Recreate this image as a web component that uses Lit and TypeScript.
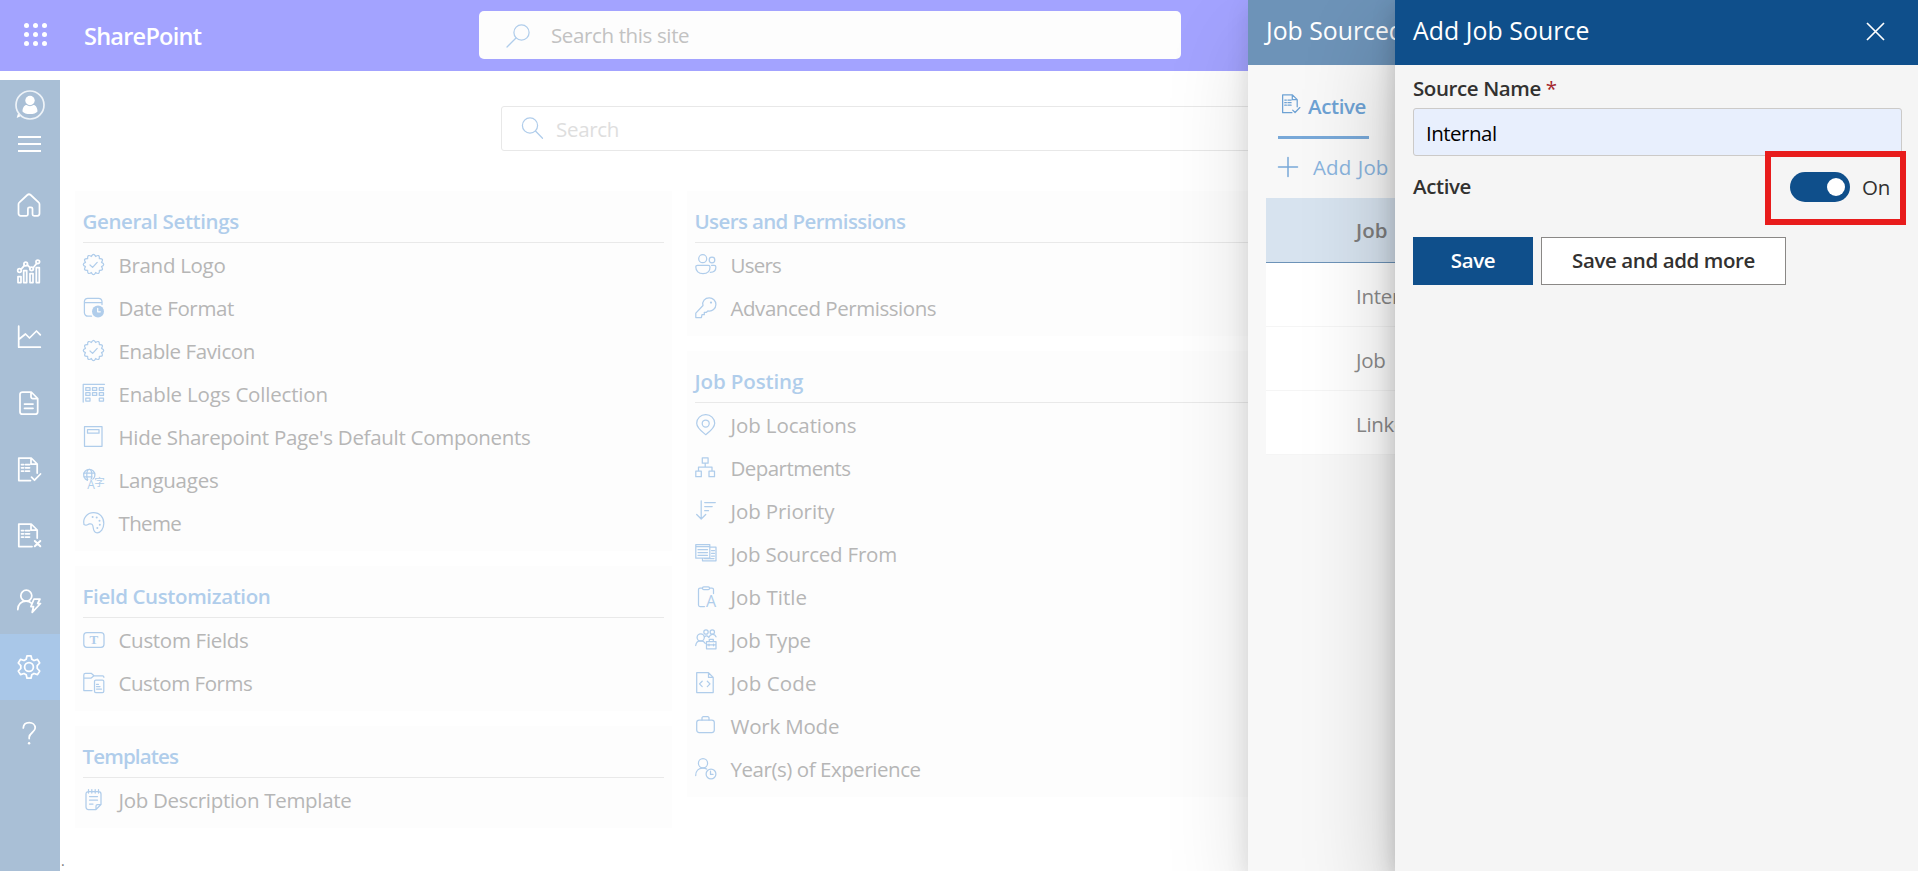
import { LitElement, html, css, svg } from "lit";
import type { SVGTemplateResult } from "lit";
import { customElement, property } from "lit/decorators.js";

/** Outline of a round badge with `n` soft lobes, centred in a 22px box. */
function scallop(n: number, outer: number, inner: number): string {
  const at = (i: number, r: number) => {
    const a = (i * Math.PI) / n - Math.PI / 2;
    return `${(10.5 + r * Math.cos(a)).toFixed(2)} ${(10.5 + r * Math.sin(a)).toFixed(2)}`;
  };
  let d = `M${at(-1, inner)}`;
  for (let i = 0; i < n; i++) d += `Q${at(i * 2, outer)} ${at(i * 2 + 1, inner)}`;
  return d + "Z";
}

const badge = svg`<path d=${scallop(12, 12.4, 8.3)} /><path d="M7 11l2.6 2.4 4.6-5" />`;

const icons: Record<string, SVGTemplateResult> = {
  badge,
  date: svg`<path d="M8.5 19.2H5a3.5 3.5 0 0 1-3.6-3.5V4.6A3.4 3.4 0 0 1 4.8 1.4h10.8A3.4 3.4 0 0 1 19 4.6V7.5M1.4 5.6H19" /><circle class="solid" cx="15" cy="14.5" r="6" /><path class="knock" d="M14.7 11.3v3.5h2.6" />`,
  logs: svg`<path d="M.2 19V1.3H21.5" /><path d="M2.800 4.600h4.200v2.800H2.800zM9.500 4.600h4.200v2.800H9.500zM16.300 4.600h4.200v2.800h-4.200zM2.800 9.600h4.200v2.800H2.800zM9.500 9.600h4.200v2.800H9.500zM16.300 9.600h4.200v2.800h-4.200zM2.800 15.200h4.200V18H2.800zM16.300 15.200h4.200V18h-4.200z" />`,
  page: svg`<path d="M1.500.7h17.500v19.600H1.500zM4.500 3.600h11.500v3.600H4.500z" />`,
  lang: svg`<circle cx="6.300" cy="6" r="5.600" /><ellipse cx="6.300" cy="6" rx="2.500" ry="5.600" /><path d="M1 4.200h10.500M1 7.800h8" /><rect class="plate" x="5" y="10.500" width="6.500" height="10" /><text x="4.200" y="19.800" font-size="12">A</text><text x="11.300" y="17.300" font-size="10.500">字</text>`,
  palette: svg`<path d="M1 12.500C-.5 6.500 4 .7 10.500.7c6.500 0 10.500 5 10.300 10.800-.2 5.500-3 9.300-6.600 9.300-3.500 0-3.700-2.800-4-5.300-.3-2.800-1.400-4.200-3.800-3.600-1.800.5-2.700 2.400-5.400.6Z" /><g class="dots"><circle cx="9.600" cy="5" r="1" /><circle cx="13.700" cy="5.500" r="1" /><circle cx="16.500" cy="8.700" r="1" /><circle cx="16.800" cy="12.700" r="1" /><circle cx="14.300" cy="16" r="1" /></g>`,
  field: svg`<rect x=".8" y="3.500" width="20.200" height="14.800" rx="3" /><text class="serif" x="6.600" y="15.200" font-size="13">T</text>`,
  forms: svg`<path d="M9 18.500H.8V3A1.700 1.700 0 0 1 2.500 1.300h5.700l2.800 2.500H19.500a1.500 1.500 0 0 1 1.400 1.500M.8 6h7.400l2.800-2.200" /><rect x="11.500" y="8" width="9.300" height="12.500" rx="1.300" /><path d="M13.500 12.300h2M13.500 14.600h3.500M13.500 17h5" />`,
  notepad: svg`<path d="M13 20.500H5.500A2.500 2.500 0 0 1 3 18V5a2.500 2.500 0 0 1 2.500-2.500h10A2.500 2.500 0 0 1 18 5v10.500zM13 20.500V17a1.500 1.500 0 0 1 1.500-1.500H18M5.500.5v3.500M8.800.5v3.500M12.200.5v3.500M15.500.5v3.500M6.500 7.500h8M6.500 11.200h8M6.500 15h3.500" />`,
  users: svg`<circle cx="7.700" cy="4.700" r="4" /><circle cx="17" cy="6" r="2.800" /><path d="M2.500 11.300h10.800a1.700 1.700 0 0 1 1.700 1.700c0 4-2.600 6.700-7 6.700s-7.200-2.700-7.200-6.700a1.700 1.700 0 0 1 1.700-1.700ZM16.500 11.300h2.700a1.700 1.700 0 0 1 1.700 1.700c0 3.300-2 5.300-5.600 5.300" />`,
  key: svg`<path d="M8 8.500C6.800 4.200 10 .8 14.200.8a6.600 6.600 0 0 1 6.700 6.600c0 4-3.600 7.500-8 6.500l-1.400 1.400H9.300v2.400H7l-.6 2.800H.8v-4.400z" /><circle class="solid" cx="16" cy="5.600" r="1.100" />`,
  pin: svg`<path d="M10.800 20.700C7 17.600 1.700 14 1.700 9.200A8.800 8.500 0 0 1 10.700.7a8.800 8.500 0 0 1 9 8.500c0 4.800-5.100 8.400-8.900 11.500Z" /><circle cx="10.700" cy="9.500" r="3.500" />`,
  org: svg`<path d="M7.300.8h5.800v5.400H7.300zM.8 14.200h5.500v5.500H.8zM14 14.200h5.500v5.500H14zM3.500 14.200V10H17v4.200M10.200 6.200V10" />`,
  sort: svg`<path d="M6.200.8v18M1.700 14.500l4.500 4.500 4.500-4.500M9.700 2.500h10.600M9.700 6.500h7.500M9.700 10.700h3.800" />`,
  sourced: svg`<path d="M.8 1.500h14v13.700H.8zM.8 3.500h14M14.800 4.200H21v13.600H7.500v-2.600M3 6.700h9.500M3 9.500h9.500M3 12.300h9.500M16.500 7.500h3M16.500 10.300h3M16.500 13.100h3M9.500 15.500H19" />`,
  title: svg`<path d="M9.500 20.500H5A1.500 1.500 0 0 1 3.500 19V3.500A1.500 1.500 0 0 1 5 2h2.500M14.500 2H17a1.500 1.500 0 0 1 1.500 1.500V7.500" /><rect x="7.500" y=".8" width="7" height="2.800" rx="1.200" /><text x="10.900" y="20.900" font-size="16">A</text>`,
  type: svg`<circle cx="5.700" cy="8.400" r="3.600" /><path d="M.7 16.500c.4-3.200 2.400-4.600 5-4.600s3.700 1 4.600 2.600" /><circle cx="11" cy="3" r="2.200" /><circle cx="17.300" cy="3" r="2.200" /><path d="M9.500 7.800c1.500-1.600 3.200-1 4.300.7 1.400-3.600 5.700-4.500 7.200-.7M11.500 12.600h9.500v7.200h-9.500zM11.500 15.800h9.500M14.300 12.500v-2.200h4v2.200M14 15v1.800M18.500 15v1.800" />`,
  code: svg`<path d="M1.700.7h11.800l4.700 4.700v15.100H1.700zM13.500.7v4.700h4.700M7.200 9.200l-2.700 2.700 2.700 2.700M12.300 9.200l2.700 2.700-2.700 2.700" />`,
  work: svg`<rect x="1.700" y="5" width="17.600" height="12.500" rx="2.500" /><path d="M7 5V3a1.300 1.300 0 0 1 1.300-1.300h4.400A1.300 1.300 0 0 1 14 3v2" />`,
  years: svg`<circle cx="8" cy="5.300" r="4.600" /><path d="M.7 17.500c0-5 3.300-7.500 7-7.500 1.800 0 3 .4 4 1.100" /><circle cx="16" cy="16" r="4.900" /><path d="M15.500 13.200v3.200h2.500" />`,

  home: svg`<path d="M9.200 22.800H3.700A2.200 2.200 0 0 1 1.500 20.600V11.300a2.500 2.500 0 0 1 .9-2L10.300 2a2.500 2.500 0 0 1 3.400 0l7.900 7.300a2.500 2.500 0 0 1 .9 2v9.300a2.200 2.200 0 0 1-2.200 2.200h-3.200a1.600 1.600 0 0 1-1.600-1.600v-5.400a1.500 1.500 0 0 0-1.500-1.500h-1.600a1.500 1.500 0 0 0-1.500 1.500v5.400a1.600 1.600 0 0 1-1.700 1.600Z" />`,
  bars: svg`<path d="M1 17.500h3v6H1zM6.700 11.500h3v12h-3zM13 14.500h3v9h-3zM19.300 8.500h3v15h-3zM4 10.300l3.500-4M10.300 6l3 2.800M16.200 8.700l3.500-4.300" /><circle cx="2.500" cy="11.500" r="1.800" /><circle cx="8.700" cy="5" r="1.800" /><circle cx="14.600" cy="9.800" r="1.800" /><circle cx="20.800" cy="2.800" r="1.800" />`,
  trend: svg`<path d="M1.700 1.200v21h21.600M1.700 14.500l6.800-5.500 4 4L19.500 6l3.800 3.800" />`,
  doc: svg`<path d="M5.500 1h8.700l6.500 6.500v13.200a2.500 2.500 0 0 1-2.500 2.500H5.500A2.500 2.500 0 0 1 3 20.700V3.500A2.500 2.500 0 0 1 5.500 1ZM14 1.200v4.600a1.800 1.800 0 0 0 1.800 1.800h4.700M7.500 13h8.500M7.500 17.300h8.500" />`,
  check: svg`<path d="M13.500 23.500H1.800V1h12.400l6 6v9M14 1v6h6M4.500 7.500h2M8.500 7.500h4M4.500 10.800h2M8.500 10.800h4M4.500 14h2M8.500 14h4M14.500 20.200l3 3 6-6.200" />`,
  cross: svg`<path d="M15 23.500H1.800V1h12.400l6 6v8M14 1v6h6M4.500 7.500h2M8.500 7.500h4M4.500 10.800h2M8.500 10.800h4M4.500 14h2M8.500 14h4" /><path stroke-width="2" d="M17.800 18l5.500 5.200M23.300 18l-5.500 5.200" />`,
  person: svg`<circle cx="9.300" cy="6.700" r="5.500" /><path d="M.8 20.500c0-5.500 3.500-8.300 8.300-8.300 2.300 0 4 .7 5.300 1.900" /><path d="M17 10h6l-2.300 4.500h2.800L15.200 23.300l1.300-5.800h-2.600z" />`,
  gear: svg`<path d="M10 .8h4l.8 3.500 2.200 1.200 3.500-1.100 2.200 3.600-2.500 2.600v2.800l2.500 2.600-2.200 3.600-3.500-1.100-2.200 1.200-.8 3.500h-4l-.8-3.500-2.200-1.200-3.500 1.100-2.200-3.600 2.500-2.600v-2.800L1.300 8l2.200-3.600L7 5.500l2.200-1.200z" /><circle cx="12" cy="12" r="4.400" />`,
  help: svg`<path d="M6.300 7C6.500 3.500 8.800 1.700 12.200 1.700s6 2 6 5.300c0 4-6 5-6 9.200v1.300" /><circle class="solid" cx="12.100" cy="22.300" r="1.200" />`,
  search: svg`<circle cx="9" cy="8.500" r="7.600" /><path d="M14.500 14l7 7.300" />`,
  searchLeft: svg`<circle cx="15.500" cy="8.500" r="7.600" /><path d="M10 14L1 23" />`,
};

const icon = (name: string, size: number, kind: string) =>
  svg`<svg class="icon ${kind}" width=${size} height=${size} viewBox="0 0 ${size} ${size}">${icons[name]}</svg>`;

const iconStyles = css`
  .icon { display: block; flex: none; fill: none; stroke: currentColor; stroke-linejoin: round; stroke-linecap: round; overflow: visible; }
  .thin { stroke-width: 1.25; }
  .bold { stroke-width: 1.75; }
  .icon .solid, .icon .dots { fill: currentColor; stroke: none; }
  .icon .knock { stroke: #fdfdfd; }
  .icon .plate { fill: #fdfdfd; stroke: none; }
  .icon text { fill: currentColor; stroke: none; font-family: "Open Sans", "Noto Sans CJK SC", sans-serif; letter-spacing: 0; }
  .icon .serif { font-family: "Liberation Serif", serif; font-weight: 700; }
`;

/** Icon name, label, and tracking of the label in px. */
type Item = [string, string, number];
interface Group { title: string; tracking: number; items: Item[]; }

const leftGroups: Group[] = [
  {
    title: "General Settings", tracking: -0.4, items: [
      ["badge", "Brand Logo", -0.3],
      ["date", "Date Format", -0.35],
      ["badge", "Enable Favicon", -0.4],
      ["logs", "Enable Logs Collection", -0.19],
      ["page", "Hide Sharepoint Page's Default Components", -0.29],
      ["lang", "Languages", -0.25],
      ["palette", "Theme", -0.65],
    ],
  },
  { title: "Field Customization", tracking: -0.38, items: [["field", "Custom Fields", -0.3], ["forms", "Custom Forms", -0.45]] },
  { title: "Templates", tracking: -0.85, items: [["notepad", "Job Description Template", -0.3]] },
];
const rightGroups: Group[] = [
  { title: "Users and Permissions", tracking: -0.62, items: [["users", "Users", -0.75], ["key", "Advanced Permissions", -0.45]] },
  {
    title: "Job Posting", tracking: -0.12, items: [
      ["pin", "Job Locations", -0.1],
      ["org", "Departments", -0.55],
      ["sort", "Job Priority", -0.1],
      ["sourced", "Job Sourced From", -0.2],
      ["title", "Job Title", 0.05],
      ["type", "Job Type", -0.1],
      ["code", "Job Code", 0.15],
      ["work", "Work Mode", -0.2],
      ["years", "Year(s) of Experience", -0.45],
    ],
  },
];
const navItems = ["home", "bars", "trend", "doc", "check", "cross", "person", "gear", "help"];

@customElement("settings-card")
export class SettingsCard extends LitElement {
  @property({ attribute: false }) group!: Group;
  static styles = [iconStyles, css`
    :host { display: block; background: #fdfdfd; padding: 0 8px 7px 7.5px; box-sizing: border-box; }
    .title { height: 51px; line-height: 61px; border-bottom: 1px solid #e9e9e9; color: #b0cdeb; font-weight: 600; }
    .row { display: flex; align-items: center; height: 43px; color: #b6b6b6; }
    .icon { color: #b0cdeb; margin: 0 14px 0 0; }
    .label { line-height: 43px; padding-top: 1px; white-space: nowrap; }
  `];
  render() {
    const { title, tracking, items } = this.group;
    return html`
      <div class="title" style="letter-spacing:${tracking}px">${title}</div>
      ${items.map(([name, label, spacing]) => html`<div class="row">${icon(name, 22, "thin")}<span class="label" style="letter-spacing:${spacing}px">${label}</span></div>`)}
    `;
  }
}

@customElement("nav-rail")
export class NavRail extends LitElement {
  static styles = [iconStyles, css`
    :host { display: flex; flex-direction: column; width: 60px; flex: none; background: #a9bfd6; color: #fff; }
    .brand { height: 92px; display: flex; flex-direction: column; align-items: center; padding-top: 10px; box-sizing: border-box; }
    .burger { width: 23px; height: 16px; margin-top: 16px; margin-right: 1px; display: flex; flex-direction: column; justify-content: space-between; }
    .burger i { height: 2px; background: #fff; }
    .item { height: 66px; display: flex; align-items: center; justify-content: center; padding: 0 2px 1px 0; box-sizing: border-box; }
    .current { background: #a9c7e8; }
  `];
  render() {
    return html`
      <div class="brand">
        <svg width="30" height="30" viewBox="0 0 30 30" fill="#fff">
          <circle cx="15" cy="15" r="14" fill="none" stroke="#eef3f8" stroke-width="1.7" />
          <circle cx="15" cy="10.5" r="4.7" /><path d="M7.500 21.500c0-4 2-6.500 4-6.500 2 1.500 5 1.500 7 0 2 0 4 2.500 4 6.500-2 3.400-13 3.400-15 0Z" />
          <path d="M3 23.500l2.500 2.700-3.800 1.800z" />
        </svg>
        <div class="burger"><i></i><i></i><i></i></div>
      </div>
      ${navItems.map((n) => html`<div class="item ${n === "gear" ? "current" : ""}">${icon(n, 24, "bold")}</div>`)}
    `;
  }
}

@customElement("source-list-panel")
export class SourceListPanel extends LitElement {
  static styles = [iconStyles, css`
    :host { display: block; overflow: hidden; white-space: nowrap; background: #f8f8f8; }
    .head { height: 65px; line-height: 60px; padding-left: 18px; background: #6d93b8; color: #fff; font-size: 24.8px; letter-spacing: var(--title-spacing); overflow: hidden; }
    .body { padding-left: 18px; }
    .tab { display: flex; align-items: center; width: 91px; height: 74px; margin-left: 12px; padding-bottom: 3px; box-sizing: border-box; border-bottom: 3px solid #78a8d8; color: #6ea2d4; font-weight: 600; letter-spacing: var(--semi-spacing); }
    .tab span { padding-top: 14px; }
    .tab .icon { margin: 10px 7px 0 4px; }
    .add { display: flex; align-items: center; height: 59px; padding: 0 0 0 12px; color: #8ab4de; letter-spacing: 0.1px; }
    .add .icon { color: #78a8d8; margin: -3px 15px 0 0; }
    .add span { word-spacing: 1px; margin-top: -4px; }
    .th { height: 64px; line-height: 64px; padding-left: 90px; background: #d7e3ef; border-bottom: 1px solid #6d93b8; color: #7e7e7e; font-weight: 600; letter-spacing: 0; overflow: hidden; }
    .td { height: 63px; line-height: 66px; padding-left: 90px; background: #fff; border-bottom: 1px solid #f5f5f5; color: #8b8b8b; overflow: hidden; }
  `];
  render() {
    return html`
      <div class="head">Job Sourced</div>
      <div class="body">
        <div class="tab"><svg class="icon thin" width="19" height="22" viewBox="1 0 24 25"><g stroke-width="1.6">${icons.check}</g></svg><span>Active</span></div>
        <div class="add"><svg class="icon" width="20" height="20" stroke-width="1.5"><path d="M10 .5v19M.5 10h19" /></svg><span>Add Job</span></div>
        <div class="th">Job</div>
        ${["Inter", "Job", "Linke"].map((s) => html`<div class="td">${s}</div>`)}
      </div>
    `;
  }
}

@customElement("add-source-panel")
export class AddSourcePanel extends LitElement {
  static styles = css`
    :host { display: block; background: #f5f5f5; color: #323130; }
    .head { display: flex; justify-content: space-between; height: 65px; line-height: 60px; padding: 0 33px 0 18px; background: #0f4f8b; color: #fff; font-size: 24.8px; letter-spacing: 0.08px; }
    .head svg { margin-top: 22px; }
    .body { padding: 0 16px 0 18px; }
    .semi { font-weight: 600; letter-spacing: var(--semi-spacing); }
    .label { height: 43px; line-height: 47px; }
    .label b { color: #a4262c; font-weight: 400; }
    .input { height: 48px; box-sizing: border-box; border: 1px solid #cccac8; border-radius: 3px; background: #e8effd; color: #000; line-height: 49px; padding-left: 12px; letter-spacing: -0.5px; }
    .active { display: flex; justify-content: space-between; height: 81px; }
    .active > span { line-height: 61px; }
    .toggle { display: flex; align-items: center; position: relative; height: 62px; padding-right: 12px; }
    .track { width: 60px; height: 30px; border-radius: 15px; box-sizing: border-box; padding: 6px 5px 6px 37px; background: #0f4f8b; margin-right: 12px; }
    .knob { width: 18px; height: 18px; border-radius: 50%; background: #fff; }
    .mark { position: absolute; left: -25px; top: -5px; width: 141px; height: 74px; box-sizing: border-box; border: 6px solid #e81c1c; }
    .buttons { display: flex; gap: 8px; }
    .btn { height: 48px; line-height: 46px; width: 120px; text-align: center; box-sizing: border-box; background: #0f4f8b; color: #fff; }
    .more { width: 245px; border: 1px solid #8a8886; background: #fff; color: #323130; line-height: 44px; }
  `;
  render() {
    return html`
      <div class="head"><span>Add Job Source</span>
        <svg width="19" height="19" viewBox="0 0 19 19" fill="none" stroke="#fff" stroke-width="1.7"><path d="M1 1l17 17M18 1L1 18" /></svg>
      </div>
      <div class="body">
        <div class="label semi">Source Name <b>*</b></div>
        <div class="input">Internal</div>
        <div class="active"><span class="semi">Active</span>
          <div class="toggle"><div class="track"><div class="knob"></div></div><span>On</span><div class="mark"></div></div>
        </div>
        <div class="buttons"><div class="btn semi">Save</div><div class="btn more semi">Save and add more</div></div>
      </div>
    `;
  }
}

@customElement("app-root")
export class AppRoot extends LitElement {
  static styles = [iconStyles, css`
    :host {
      display: flex; flex-direction: column; position: relative; height: 871px; overflow: hidden; background: #fff;
      font-family: "Open Sans", "Noto Sans", sans-serif; font-size: 20.5px; letter-spacing: -0.3px;
      --semi-spacing: -0.4px; --title-spacing: 0px;
    }
    .top { display: flex; align-items: center; height: 71px; flex: none; padding-bottom: 2px; box-sizing: border-box; background: #a3a3ff; color: #fff; }
    .waffle { width: 23px; height: 23px; margin: 0 37px 0 24px; display: grid; grid-template-columns: repeat(3, 5px); grid-auto-rows: 5px; gap: 4px; }
    .waffle i { border-radius: 50%; background: #fff; }
    .name { width: 395px; font-size: 23.5px; font-weight: 600; letter-spacing: -0.75px; padding-top: 2px; }
    .site-search { display: flex; align-items: center; width: 702px; height: 48px; box-sizing: border-box; padding: 1px 0 0 27px; border-radius: 5px; background: #fdfdfd; color: #c2c2c2; letter-spacing: -0.37px; }
    .site-search .icon { color: #b0cdeb; margin: 2px 21px 0 0; }
    .main { display: flex; flex: 1; margin-top: 9px; }
    .dot { align-self: flex-end; width: 15px; height: 22px; line-height: 24px; color: #777; font-size: 14px; text-indent: 1px; }
    .content { flex: 1; }
    .filter { display: flex; align-items: center; width: 900px; height: 45px; box-sizing: border-box; margin: 26px 0 40px 426px; padding-left: 19px; border: 1px solid #e8e8e8; border-radius: 3px; color: #dedede; }
    .filter .icon { color: #b0cdeb; margin: -2px 13px 0 0; }
    .columns { display: grid; grid-template-columns: 597px 1fr; column-gap: 15px; align-items: start; }
    .column { display: flex; flex-direction: column; gap: 15px; }
    .list-panel { position: absolute; left: 1248px; top: 0; width: 147px; height: 871px; box-shadow: rgba(0, 0, 0, 0.13) 0 38px 86px, rgba(0, 0, 0, 0.1) 0 7px 22px; }
    .add-panel { position: absolute; left: 1395px; top: 0; width: 523px; height: 871px; box-shadow: rgba(0, 0, 0, 0.22) 0 38px 86px, rgba(0, 0, 0, 0.18) 0 7px 22px; }
  `];
  render() {
    const column = (groups: Group[]) => html`<div class="column">${groups.map((g) => html`<settings-card .group=${g}></settings-card>`)}</div>`;
    return html`
      <header class="top">
        <div class="waffle">${Array.from({ length: 9 }, () => html`<i></i>`)}</div>
        <div class="name">SharePoint</div>
        <div class="site-search">${icon("searchLeft", 24, "thin")}<span>Search this site</span></div>
      </header>
      <div class="main">
        <nav-rail></nav-rail>
        <div class="dot">.</div>
        <div class="content">
          <div class="filter">${icon("search", 22, "thin")}<span>Search</span></div>
          <div class="columns">${column(leftGroups)}${column(rightGroups)}</div>
        </div>
      </div>
      <source-list-panel class="list-panel"></source-list-panel>
      <add-source-panel class="add-panel"></add-source-panel>
    `;
  }
}
